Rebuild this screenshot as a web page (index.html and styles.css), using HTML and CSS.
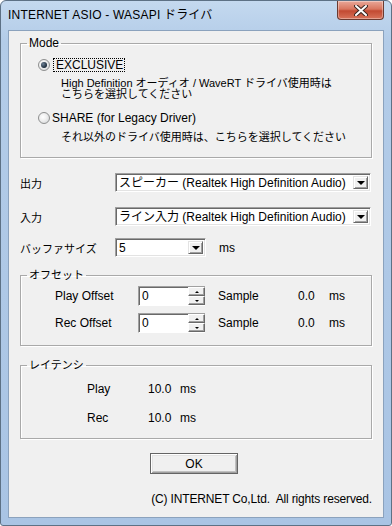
FILE: index.html
```html
<!DOCTYPE html>
<html lang="ja">
<head>
    <meta charset="UTF-8">
    <meta name="viewport" content="width=device-width, initial-scale=1.0">
    <title>INTERNET ASIO - WASAPI ドライバ</title>
    <link rel="stylesheet" href="styles.css">
</head>
<body>
    <div class="window">
        <div class="titlebar">
            <span class="title">INTERNET ASIO - WASAPI ドライバ</span>
            <div class="close-btn">
                <svg width="14" height="11" viewBox="0 0 14 11">
                    <path d="M2 1 L12 10 M12 1 L2 10" stroke="#3b2620" stroke-width="4" stroke-linecap="round"/>
                    <path d="M2 1 L12 10 M12 1 L2 10" stroke="#ffffff" stroke-width="2" stroke-linecap="round"/>
                </svg>
            </div>
        </div>

        <div class="client">
            <fieldset class="group group-mode">
                <legend>Mode</legend>
                <div class="radio-row">
                    <span class="radio checked"></span>
                    <span class="radio-label focused">EXCLUSIVE</span>
                </div>
                <p class="desc first">High Definition オーディオ / WaveRT ドライバ使用時は<br>こちらを選択してください</p>
                <div class="radio-row second">
                    <span class="radio"></span>
                    <span class="radio-label">SHARE (for Legacy Driver)</span>
                </div>
                <p class="desc last">それ以外のドライバ使用時は、こちらを選択してください</p>
            </fieldset>

            <div class="field-row row-out">
                <span class="field-label ja">出力</span>
                <div class="combo wide">
                    <span class="combo-text">スピーカー (Realtek High Definition Audio)</span>
                    <span class="combo-btn"><span class="arrow-down"></span></span>
                </div>
            </div>
            <div class="field-row row-in">
                <span class="field-label ja">入力</span>
                <div class="combo wide">
                    <span class="combo-text">ライン入力 (Realtek High Definition Audio)</span>
                    <span class="combo-btn"><span class="arrow-down"></span></span>
                </div>
            </div>
            <div class="field-row row-buf">
                <span class="field-label ja">バッファサイズ</span>
                <div class="combo small">
                    <span class="combo-text">5</span>
                    <span class="combo-btn"><span class="arrow-down"></span></span>
                </div>
                <span class="unit">ms</span>
            </div>

            <fieldset class="group group-offset">
                <legend class="ja">オフセット</legend>
                <div class="offset-row">
                    <span class="offset-label">Play Offset</span>
                    <div class="spin">
                        <span class="spin-text">0</span>
                        <span class="spin-btns">
                            <span class="spin-btn"><span class="arrow-up"></span></span>
                            <span class="spin-btn"><span class="arrow-down tiny"></span></span>
                        </span>
                    </div>
                    <span class="offset-unit">Sample</span>
                    <span class="offset-value">0.0</span>
                    <span>ms</span>
                </div>
                <div class="offset-row second">
                    <span class="offset-label">Rec Offset</span>
                    <div class="spin">
                        <span class="spin-text">0</span>
                        <span class="spin-btns">
                            <span class="spin-btn"><span class="arrow-up"></span></span>
                            <span class="spin-btn"><span class="arrow-down tiny"></span></span>
                        </span>
                    </div>
                    <span class="offset-unit">Sample</span>
                    <span class="offset-value">0.0</span>
                    <span>ms</span>
                </div>
            </fieldset>

            <fieldset class="group group-latency">
                <legend class="ja">レイテンシ</legend>
                <div class="latency-row">
                    <span class="latency-label">Play</span>
                    <span class="latency-value">10.0</span>
                    <span>ms</span>
                </div>
                <div class="latency-row second">
                    <span class="latency-label">Rec</span>
                    <span class="latency-value">10.0</span>
                    <span>ms</span>
                </div>
            </fieldset>

            <div class="button-row">
                <button class="ok-button">OK</button>
            </div>

            <p class="copyright">(C) INTERNET Co,Ltd.&nbsp; All rights reserved.</p>
        </div>
    </div>
</body>
</html>
```

FILE: styles.css
```css
body {
    margin: 0;
    padding: 0;
    background: #ffffff;
    font-family: "Liberation Sans", "Noto Sans CJK JP", sans-serif;
    font-size: 12px;
    color: #000;
}

.ja {
    font-size: 11px;
}

.window {
    width: 392px;
    height: 526px;
    box-sizing: border-box;
    border: 1px solid #5d7185;
    border-radius: 6px 6px 3px 3px;
    background: linear-gradient(180deg, #c4d9ef 0%, #b3cce8 40px, #a9c4e4 100%);
    display: flex;
    flex-direction: column;
}

.titlebar {
    height: 29px;
    display: flex;
    justify-content: space-between;
    align-items: flex-start;
}

.title {
    padding: 7px 0 0 7px;
    line-height: 14px;
    letter-spacing: 0.2px;
    color: #000;
}

.close-btn {
    width: 45px;
    height: 18px;
    margin-right: 7px;
    border: 1px solid #6b3a30;
    border-top: none;
    border-radius: 0 0 4px 4px;
    background: linear-gradient(180deg, #e9a899 0%, #d9765f 45%, #c24a32 55%, #d8735a 100%);
    display: flex;
    justify-content: center;
    align-items: center;
    box-shadow: inset 0 0 0 1px rgba(255, 255, 255, 0.35);
}

.client {
    margin: 0 7px 7px 7px;
    height: 488px;
    box-sizing: border-box;
    border: 1px solid #8ba2bd;
    background: #f0f0f0;
    padding: 5px 11px 0 11px;
}

/* group boxes */
.group {
    margin: 0;
    padding: 0;
    border: 1px solid #a9a9a9;
    box-shadow: inset 1px 1px 0 #ffffff, 1px 1px 0 #ffffff;
}

.group legend {
    margin-left: 6px;
    padding: 0 2px 0 2px;
    line-height: 14px;
}

.group-mode {
    padding: 8px 0 14px 0;
}

.radio-row {
    display: flex;
    align-items: center;
    height: 14px;
    margin-left: 17px;
}

.radio-row.second {
    margin-top: 11px;
}

.radio {
    width: 10px;
    height: 10px;
    border: 1px solid #8e8f8f;
    border-radius: 50%;
    background: radial-gradient(circle at 40% 40%, #ffffff 0%, #f0f0f0 40%, #cfd2d4 100%);
    position: relative;
    flex-shrink: 0;
}

.radio.checked::after {
    content: "";
    position: absolute;
    left: 2px;
    top: 2px;
    width: 6px;
    height: 6px;
    border-radius: 50%;
    background: radial-gradient(circle at 35% 35%, #6f8396 0%, #1b2a3a 70%);
}

.radio-label {
    margin-left: 2px;
    line-height: 12px;
}

.radio-label.focused {
    margin-left: 3px;
    padding: 0 1px 0 2px;
    border: 1px dotted #000;
}

.desc {
    margin: 0 0 0 40px;
    font-size: 11px;
    line-height: 11px;
    white-space: nowrap;
}

.desc.first {
    margin-top: 6px;
}

.desc.last {
    margin-top: 7px;
}

/* dropdown rows */
.field-row {
    display: flex;
    align-items: center;
    height: 19px;
}

.row-out {
    margin-top: 15px;
}

.row-in {
    margin-top: 15px;
}

.row-buf {
    margin-top: 12px;
}

.field-label {
    width: 95px;
}

.combo {
    height: 19px;
    box-sizing: border-box;
    display: flex;
    align-items: center;
    justify-content: space-between;
    background: #ffffff;
    border-top: 1px solid #a0a0a0;
    border-left: 1px solid #a0a0a0;
    border-bottom: 1px solid #ffffff;
    border-right: 1px solid #ffffff;
    box-shadow: inset 1px 1px 0 #696969, inset -1px -1px 0 #e3e3e3;
    padding: 0 2px 0 3px;
}

.combo.wide {
    width: 256px;
}

.combo.small {
    width: 91px;
}

.combo-text {
    line-height: 14px;
    white-space: nowrap;
}

.combo-btn {
    width: 15px;
    height: 13px;
    box-sizing: border-box;
    background: #f0f0f0;
    border-top: 1px solid #e3e3e3;
    border-left: 1px solid #e3e3e3;
    border-bottom: 1px solid #696969;
    border-right: 1px solid #696969;
    box-shadow: inset 1px 1px 0 #ffffff, inset -1px -1px 0 #a0a0a0;
    display: flex;
    justify-content: center;
    align-items: center;
}

.arrow-down {
    width: 0;
    height: 0;
    border-left: 4px solid transparent;
    border-right: 4px solid transparent;
    border-top: 4px solid #000;
}

.arrow-down.tiny {
    border-left-width: 2px;
    border-right-width: 2px;
    border-top-width: 2px;
}

.arrow-up {
    width: 0;
    height: 0;
    border-left: 2px solid transparent;
    border-right: 2px solid transparent;
    border-bottom: 2px solid #000;
}

.unit {
    margin-left: 13px;
}

/* offset group */
.group-offset {
    margin-top: 11px;
    padding: 4px 0 12px 0;
}

.offset-row {
    display: flex;
    align-items: center;
    height: 20px;
    padding-left: 34px;
}

.offset-row.second {
    margin-top: 7px;
}

.offset-label {
    width: 83px;
}

.spin {
    width: 67px;
    height: 20px;
    display: flex;
}

.spin-text {
    width: 50px;
    box-sizing: border-box;
    background: #ffffff;
    border-top: 1px solid #a0a0a0;
    border-left: 1px solid #a0a0a0;
    border-bottom: 1px solid #ffffff;
    box-shadow: inset 1px 1px 0 #696969;
    padding: 2px 0 0 3px;
    line-height: 14px;
}

.spin-btns {
    width: 17px;
    display: flex;
    flex-direction: column;
    border-bottom: 1px solid #ffffff;
    border-top: 1px solid #a0a0a0;
}

.spin-btn {
    flex: 1;
    box-sizing: border-box;
    background: #f0f0f0;
    border-top: 1px solid #ffffff;
    border-left: 1px solid #ffffff;
    border-bottom: 1px solid #696969;
    border-right: 1px solid #696969;
    box-shadow: inset -1px -1px 0 #a0a0a0;
    display: flex;
    justify-content: center;
    align-items: center;
}

.offset-unit {
    margin-left: 13px;
    width: 80px;
}

.offset-value {
    width: 31px;
}

/* latency group */
.group-latency {
    margin-top: 12px;
    padding: 10px 0 13px 0;
}

.latency-row {
    display: flex;
    align-items: center;
    height: 14px;
    padding-left: 66px;
}

.latency-row.second {
    margin-top: 15px;
}

.latency-label {
    width: 61px;
}

.latency-value {
    width: 32px;
}

/* bottom */
.button-row {
    margin-top: 14px;
    padding-left: 130px;
}

.ok-button {
    width: 88px;
    height: 21px;
    margin: 0;
    padding: 0;
    font-family: inherit;
    font-size: 12px;
    background: #f0f0f0;
    border: 1px solid #646464;
    box-shadow: inset 1px 1px 0 #ffffff, inset -1px -1px 0 #a0a0a0, inset 2px 2px 0 #e3e3e3, inset -2px -2px 0 #c0c0c0;
    color: #000;
}

.copyright {
    margin: 18px 0 0 0;
    line-height: 14px;
    text-align: right;
    letter-spacing: -0.15px;
    white-space: nowrap;
}
```
